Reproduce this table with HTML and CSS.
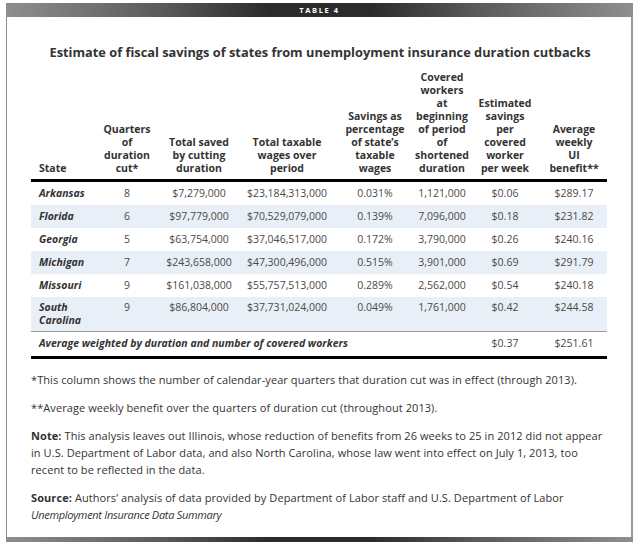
FILE: index.html
```html
<!DOCTYPE html>
<html lang="en">
<head>
<meta charset="utf-8">
<title>Table 4</title>
<link rel="stylesheet" href="styles.css">
</head>
<body>
<div class="frame">
  <div class="topbar">TABLE 4</div>
  <div class="content">
    <h1 class="title">Estimate of fiscal savings of states from unemployment insurance duration cutbacks</h1>
    <table class="data">
      <colgroup>
        <col class="c1"><col class="c2"><col class="c3"><col class="c4"><col class="c5"><col class="c6"><col class="c7"><col class="c8">
      </colgroup>
      <thead>
        <tr>
          <th class="left">State</th>
          <th>Quarters<br>of<br>duration<br>cut*</th>
          <th>Total saved<br>by cutting<br>duration</th>
          <th>Total taxable<br>wages over<br>period</th>
          <th>Savings as<br>percentage<br>of state’s<br>taxable<br>wages</th>
          <th>Covered<br>workers<br>at<br>beginning<br>of period<br>of<br>shortened<br>duration</th>
          <th>Estimated<br>savings<br>per<br>covered<br>worker<br>per week</th>
          <th>Average<br>weekly<br>UI<br>benefit**</th>
        </tr>
      </thead>
      <tbody>
        <tr>
          <td class="state">Arkansas</td><td>8</td><td>$7,279,000</td><td>$23,184,313,000</td><td>0.031%</td><td>1,121,000</td><td>$0.06</td><td>$289.17</td>
        </tr>
        <tr class="alt">
          <td class="state">Florida</td><td>6</td><td>$97,779,000</td><td>$70,529,079,000</td><td>0.139%</td><td>7,096,000</td><td>$0.18</td><td>$231.82</td>
        </tr>
        <tr>
          <td class="state">Georgia</td><td>5</td><td>$63,754,000</td><td>$37,046,517,000</td><td>0.172%</td><td>3,790,000</td><td>$0.26</td><td>$240.16</td>
        </tr>
        <tr class="alt">
          <td class="state">Michigan</td><td>7</td><td>$243,658,000</td><td>$47,300,496,000</td><td>0.515%</td><td>3,901,000</td><td>$0.69</td><td>$291.79</td>
        </tr>
        <tr>
          <td class="state">Missouri</td><td>9</td><td>$161,038,000</td><td>$55,757,513,000</td><td>0.289%</td><td>2,562,000</td><td>$0.54</td><td>$240.18</td>
        </tr>
        <tr class="alt tall">
          <td class="state">South<br>Carolina</td><td>9</td><td>$86,804,000</td><td>$37,731,024,000</td><td>0.049%</td><td>1,761,000</td><td>$0.42</td><td>$244.58</td>
        </tr>
        <tr class="total">
          <td class="state" colspan="6">Average weighted by duration and number of covered workers</td><td>$0.37</td><td>$251.61</td>
        </tr>
      </tbody>
    </table>
    <div class="notes">
      <p>*This column shows the number of calendar-year quarters that duration cut was in effect (through 2013).</p>
      <p>**Average weekly benefit over the quarters of duration cut (throughout 2013).</p>
      <p><b>Note:</b> This analysis leaves out Illinois, whose reduction of benefits from 26 weeks to 25 in 2012 did not appear<br>in U.S. Department of Labor data, and also North Carolina, whose law went into effect on July 1, 2013, too<br>recent to be reflected in the data.</p>
      <p><b>Source:</b> Authors’ analysis of data provided by Department of Labor staff and U.S. Department of Labor<br><i class="pub">Unemployment Insurance Data Summary</i></p>
    </div>
  </div>
  <div class="bottombar"></div>
</div>
</body>
</html>
```

FILE: styles.css
```css
html, body {
  margin: 0;
  padding: 0;
  background: #ffffff;
}

body {
  padding: 3px 0 0 6px;
  font-family: "Open Sans", "Liberation Sans", sans-serif;
  color: #333333;
}

.frame {
  width: 627px;
}

.topbar {
  height: 14px;
  line-height: 14px;
  background: linear-gradient(to right, #8e8e8e 0%, #5a5a5a 25%, #2b2b2b 42%, #2b2b2b 58%, #5a5a5a 75%, #8e8e8e 100%);
  color: #ffffff;
  font-size: 7.5px;
  font-weight: 700;
  letter-spacing: 1.6px;
  text-align: center;
}

.content {
  border-left: 1px solid #8a8a8a;
  border-right: 2px solid #9a9a9a;
  padding: 26px 22px 14px 24px;
}

.title {
  margin: 0 0 10px 0;
  font-size: 12.8px;
  line-height: 18px;
  font-weight: 700;
  color: #333333;
  text-align: center;
}

.data {
  width: 576px;
  table-layout: fixed;
  border-collapse: collapse;
  font-size: 10.5px;
}

.c1 { width: 64px; }
.c2 { width: 64px; }
.c3 { width: 80px; }
.c4 { width: 96px; }
.c5 { width: 80px; }
.c6 { width: 54px; }
.c7 { width: 72px; }
.c8 { width: 66px; }

.data th {
  vertical-align: bottom;
  font-size: 10.5px;
  line-height: 13px;
  font-weight: 700;
  color: #333333;
  text-align: center;
  white-space: nowrap;
  padding: 0 0 4px 0;
  border-bottom: 3px solid #000000;
}

.data th.left {
  text-align: left;
  padding-left: 8px;
}

.data td {
  height: 23px;
  padding: 0;
  text-align: center;
  vertical-align: middle;
  color: #4a4a4a;
  line-height: 13px;
  white-space: nowrap;
}

.data td.state {
  text-align: left;
  padding-left: 8px;
  font-weight: 700;
  font-style: italic;
  color: #333333;
}

.data tr.alt td {
  background: #e9eff7;
}

.data tr.tall td {
  height: 34px;
  vertical-align: top;
  padding-top: 4px;
  box-sizing: border-box;
}

.data tr.total td {
  height: 24px;
  border-top: 1px solid #9a9a9a;
  border-bottom: 3px solid #000000;
}

.notes {
  margin-top: 12px;
  font-size: 11px;
  letter-spacing: 0.08px;
  line-height: 17px;
  color: #333333;
  white-space: nowrap;
}

.notes p {
  margin: 0 0 11px 0;
}

.notes p:last-child {
  margin-bottom: 0;
}

.notes b {
  font-weight: 700;
}

.notes .pub {
  letter-spacing: -0.3px;
}

.bottombar {
  height: 5px;
  background: linear-gradient(to right, #8e8e8e 0%, #5a5a5a 25%, #2b2b2b 42%, #2b2b2b 58%, #5a5a5a 75%, #8e8e8e 100%);
}
```
